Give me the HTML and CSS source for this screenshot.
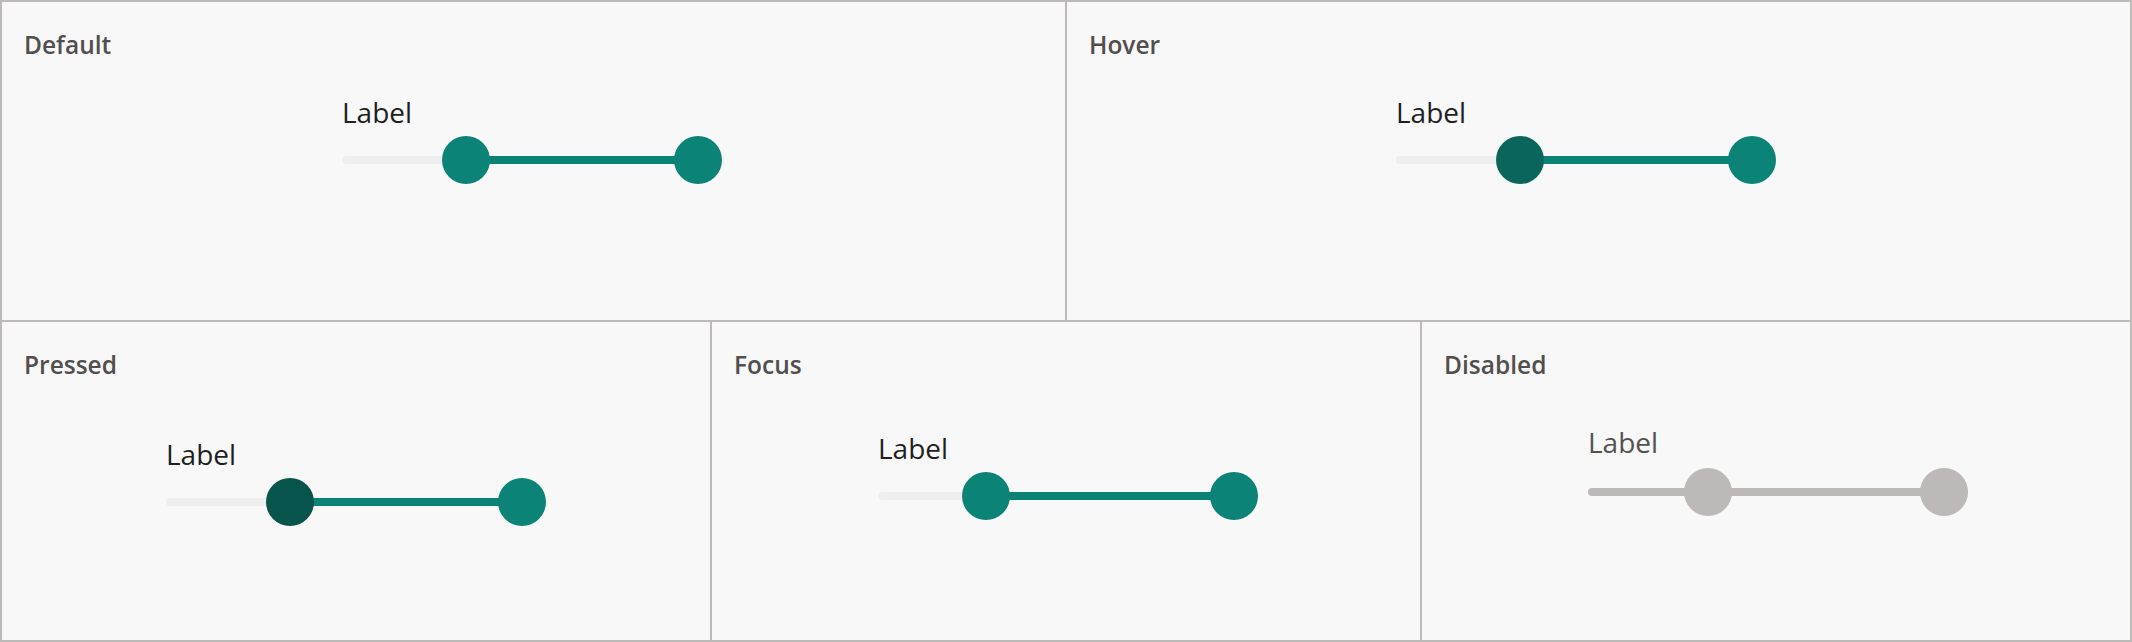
FILE: index.html
```html
<!DOCTYPE html>
<html lang="en">
<head>
<meta charset="utf-8">
<title>Range slider states</title>
<link rel="stylesheet" href="styles.css">
</head>
<body>
<div class="board">
  <div class="row">
    <section class="panel">
      <h2 class="title">Default</h2>
      <div class="stage stage-default">
        <div class="slider">
          <div class="label">Label</div>
          <div class="rail">
            <div class="track"></div>
            <div class="range" style="left:124px;width:232px"></div>
            <div class="thumb" style="left:124px"></div>
            <div class="thumb" style="left:356px"></div>
          </div>
        </div>
      </div>
    </section>
    <section class="panel">
      <h2 class="title">Hover</h2>
      <div class="stage stage-hover">
        <div class="slider">
          <div class="label">Label</div>
          <div class="rail">
            <div class="track"></div>
            <div class="range" style="left:124px;width:232px"></div>
            <div class="thumb thumb-hover" style="left:124px"></div>
            <div class="thumb" style="left:356px"></div>
          </div>
        </div>
      </div>
    </section>
  </div>
  <div class="row">
    <section class="panel">
      <h2 class="title">Pressed</h2>
      <div class="stage stage-pressed">
        <div class="slider">
          <div class="label">Label</div>
          <div class="rail">
            <div class="track"></div>
            <div class="range" style="left:124px;width:232px"></div>
            <div class="thumb thumb-pressed" style="left:124px"></div>
            <div class="thumb" style="left:356px"></div>
          </div>
        </div>
      </div>
    </section>
    <section class="panel">
      <h2 class="title">Focus</h2>
      <div class="stage stage-focus">
        <div class="slider">
          <div class="label">Label</div>
          <div class="rail">
            <div class="track"></div>
            <div class="range" style="left:108px;width:248px"></div>
            <div class="thumb" style="left:108px"></div>
            <div class="thumb" style="left:356px"></div>
          </div>
        </div>
      </div>
    </section>
    <section class="panel">
      <h2 class="title">Disabled</h2>
      <div class="stage stage-disabled">
        <div class="slider slider-disabled">
          <div class="label">Label</div>
          <div class="rail">
            <div class="track"></div>
            <div class="range" style="left:120px;width:236px"></div>
            <div class="thumb" style="left:120px"></div>
            <div class="thumb" style="left:356px"></div>
          </div>
        </div>
      </div>
    </section>
  </div>
</div>
</body>
</html>
```
FILE: styles.css
```css
* { box-sizing: border-box; }

html, body {
  margin: 0;
  padding: 0;
  background: #f8f8f8;
}

body {
  font-family: "Open Sans", "Noto Sans", sans-serif;
}

.board {
  width: 2132px;
  height: 642px;
  display: flex;
  flex-direction: column;
  border-top: 2px solid #bdb9b9;
  border-left: 2px solid #bdb9b9;
  background: #f8f8f8;
}

.row {
  display: flex;
  height: 320px;
}

.panel {
  flex: 1 1 0;
  display: flex;
  flex-direction: column;
  border-right: 2px solid #bdb9b9;
  border-bottom: 2px solid #bdb9b9;
  padding: 27px 0 0 22px;
}

.title {
  margin: 0;
  font-size: 24.5px;
  line-height: 32px;
  font-weight: 600;
  color: #524e4e;
}

.stage {
  display: flex;
  justify-content: center;
  margin-left: -22px;
}

.stage-default { padding-top: 31px; }
.stage-default .slider { margin-right: 3px; }
.stage-hover { padding-top: 31px; }
.stage-hover .slider { margin-right: 25px; }
.stage-pressed { padding-top: 53px; }
.stage-focus { padding-top: 47px; }
.stage-focus .slider { margin-left: 4px; }
.stage-disabled { padding-top: 41px; }
.stage-disabled .slider { margin-left: 4px; }

.slider {
  width: 380px;
}

.label {
  font-size: 28px;
  line-height: 40px;
  color: #1f1f1f;
  margin-bottom: 4px;
}

.rail {
  position: relative;
  height: 48px;
}

.track {
  position: absolute;
  left: 0;
  right: 0;
  top: 20px;
  height: 8px;
  border-radius: 4px;
  background: #eeeeee;
}

.range {
  position: absolute;
  top: 20px;
  height: 8px;
  background: #0c8377;
}

.thumb {
  position: absolute;
  top: 0;
  width: 48px;
  height: 48px;
  margin-left: -24px;
  border-radius: 50%;
  background: #0c8377;
}

.thumb-hover { background: #0a665c; }
.thumb-pressed { background: #06544b; }

.slider-disabled .label {
  color: #555151;
  margin-bottom: 6px;
}
.slider-disabled .track,
.slider-disabled .range,
.slider-disabled .thumb {
  background: #bdb9b8;
}
```
